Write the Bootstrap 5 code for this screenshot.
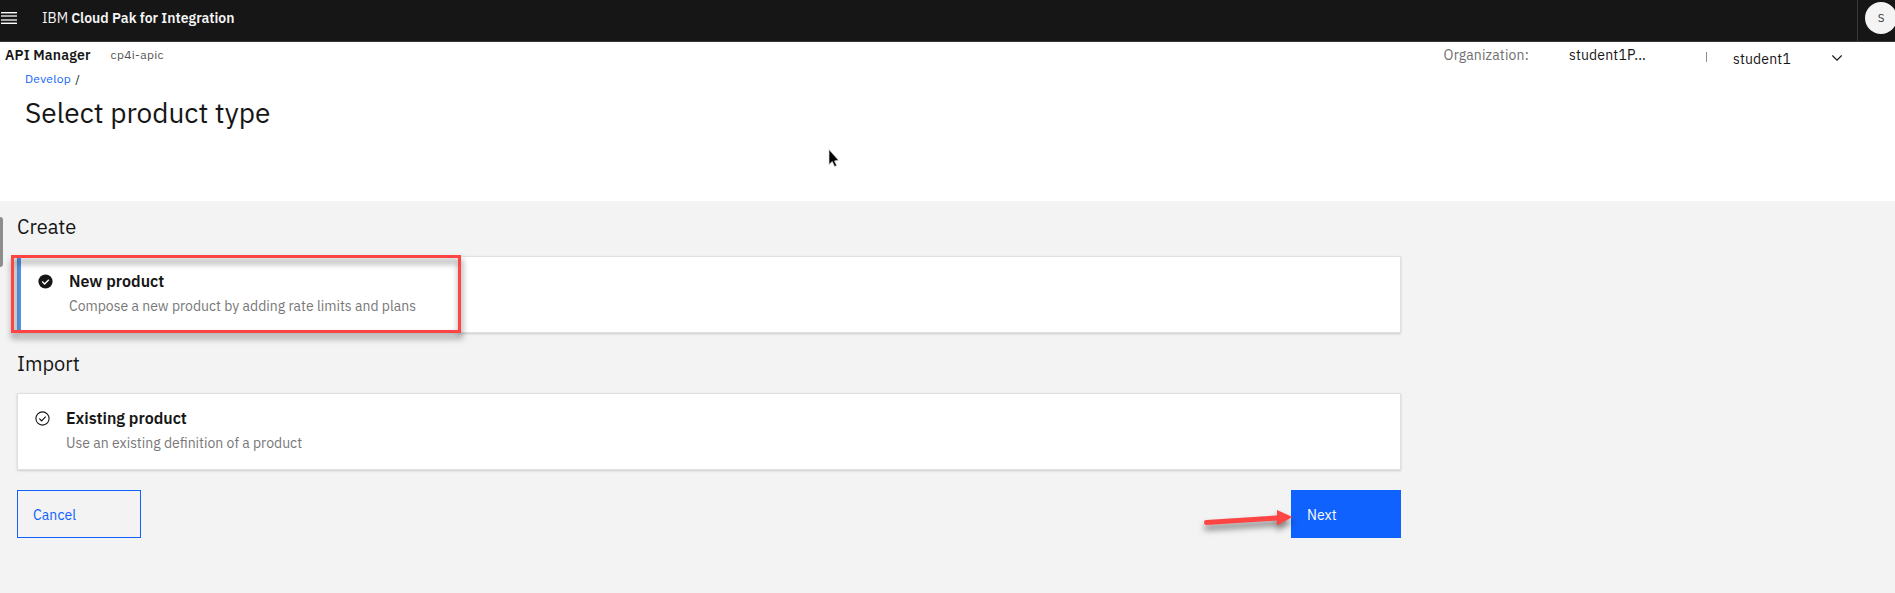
<!DOCTYPE html>
<html lang="en">
<head>
<meta charset="utf-8">
<meta name="viewport" content="width=device-width, initial-scale=1">
<title>API Manager – Select product type</title>
<link href="https://cdn.jsdelivr.net/npm/bootstrap@5.3.0/dist/css/bootstrap.min.css" rel="stylesheet">
<style>
body{font-family:"IBM Plex Sans",Roboto,"Liberation Sans",sans-serif;font-size:14px;color:#161616;overflow:hidden;line-height:24px}
.app-shell{height:593px}
.top-header{height:42px;background:#161616;border-bottom:1px solid #393939;color:#f4f4f4;padding-left:1px}
.brand-name{line-height:36px;margin-left:25px}
.brand-name b{font-weight:600}
.brand-name span{font-weight:400;margin-right:3px}
.menu-icon{margin-top:12px}
.user-cell{width:38px;border-left:1px solid #393939;overflow:hidden;padding:2px 0 0 7px}
.avatar-dot{flex:0 0 32px;width:32px;height:32px;background:#f4f4f4;color:#393939;font-size:11.5px;line-height:32px}
.sub-header{height:26px;line-height:26px;padding:0 53px 0 5px;letter-spacing:.16px}
.product-name{font-weight:600;width:105.6px}
.instance-name{font-size:12px;letter-spacing:.32px;color:#525252}
.org-label{color:#6f6f6f;width:125.4px}
.org-value{width:137px}
.org-rule{width:1px;height:10px;background:#8d8d8d;margin:10px 26px 0 0}
.user-name{width:99px;padding-top:4px}
.crumbs{font-size:12px;line-height:22px;letter-spacing:.32px;padding-left:25px}
.crumbs a,.cancel-btn{color:#0f62fe}
.crumbs span{margin-left:1px}
.page-title{font-size:28px;font-weight:400;line-height:45px;margin:0;padding-left:25px}
.page-head{height:159px}
.content-area{background:#f3f3f3;padding-left:17px}
.content-col{width:1384px}
.section-title{font-size:20px;font-weight:400;line-height:51px;margin:0 0 4px}
.section-title.is-next{margin-top:5px}
.tile{height:77px;background:#fff;border:1px solid #e0e0e0;box-shadow:0 1px 2px rgba(0,0,0,.16);padding:12px 0 0 16.6px;gap:16.4px}
.tile.is-selected{border-left:4px solid #5596e6}
.tile-name{font-size:16px;font-weight:600;line-height:24px;margin-bottom:1px}
.tile-text{color:#777}
.tile svg{margin-top:4.5px}
.action-btn{height:48px;border-radius:0;font-size:14px;text-align:left;padding:1px 15px 0;line-height:46px;letter-spacing:.1px}
.cancel-btn{width:124px;border:1px solid #0f62fe}
.next-btn{width:110px;background:#0f62fe;color:#fff;border:1px solid #0f62fe}
.action-row{margin-top:20px}
.side-handle{position:absolute;left:0;top:16px;width:3px;height:50px;background:#8d8d8d;border-radius:0 4px 4px 0}
.callout-box{position:absolute;left:-10px;top:-2px;width:450px;height:78px;border:3px solid #ff4444;filter:drop-shadow(1px 5px 3px rgba(0,0,0,.5));pointer-events:none}
.callout-arrow{position:absolute;right:100px;top:5px;overflow:visible;filter:drop-shadow(0 5px 3px rgba(0,0,0,.5))}
.mouse-pointer{position:absolute;left:828px;top:107px}
</style>
<script src="https://cdn.jsdelivr.net/npm/bootstrap@5.3.0/dist/js/bootstrap.bundle.min.js"></script>
</head>
<body>
<div class="app-shell d-flex flex-column">
  <header class="top-header d-flex">
    <svg class="menu-icon" width="16" height="12" viewBox="0 0 16 12" shape-rendering="crispEdges"><path fill="#fff" d="M0 0h16v1H0zm0 11h16v1H0z"/><path fill="#777" d="M0 1h16v1H0zm0 9h16v1H0z"/><path fill="#aaa" d="M0 3h16v2H0zm0 4h16v2H0z"/></svg>
    <div class="brand-name"><span>IBM</span><b>Cloud Pak for Integration</b></div>
    <div class="user-cell d-flex ms-auto"><div class="avatar-dot rounded-circle text-center">S</div></div>
  </header>

  <section class="page-head position-relative">
    <div class="sub-header d-flex">
      <div class="product-name">API Manager</div>
      <div class="instance-name">cp4i-apic</div>
      <div class="d-flex ms-auto">
        <div class="org-label">Organization:</div>
        <div class="org-value">student1P...</div>
        <div class="org-rule"></div>
        <div class="user-name">student1</div>
        <svg width="10" height="26" viewBox="0 0 10 26" fill="none" stroke="#161616" stroke-width="1.2"><path d="M.3 13.500 5 18.200l4.700-4.700"/></svg>
      </div>
    </div>
    <nav class="crumbs"><a href="#" class="text-decoration-none">Develop</a><span> /</span></nav>
    <h1 class="page-title">Select product type</h1>
    <svg class="mouse-pointer" width="14" height="20" viewBox="0 0 14 20"><path d="M1 .5v15l3.300-3 2.200 5 2.200-1-2.200-4.600 4-.6z" fill="#000" stroke="#ddd" stroke-width=".7"/></svg>
  </section>

  <main class="content-area position-relative flex-grow-1">
    <div class="side-handle"></div>
    <div class="content-col">
      <h2 class="section-title">Create</h2>
      <div class="tile is-selected d-flex position-relative">
        <svg width="15" height="15" viewBox="0 0 15 15"><circle cx="7.500" cy="7.500" r="7.100" fill="#161616"/><path d="m4.200 7.600 2.400 2.300 4.200-4.200" fill="none" stroke="#fff" stroke-width="1.400"/></svg>
        <div>
          <div class="tile-name">New product</div>
          <div class="tile-text">Compose a new product by adding rate limits and plans</div>
        </div>
        <div class="callout-box"></div>
      </div>
      <h2 class="section-title is-next">Import</h2>
      <div class="tile d-flex">
        <svg width="15" height="15" viewBox="0 0 15 15" fill="none" stroke="#161616"><circle cx="7.500" cy="7.500" r="6.600" stroke-width="1.100"/><path d="m4.300 7.600 2.300 2.200 4.100-4.100" stroke-width="1.200"/></svg>
        <div>
          <div class="tile-name">Existing product</div>
          <div class="tile-text">Use an existing definition of a product</div>
        </div>
      </div>
      <div class="action-row d-flex justify-content-between position-relative">
        <button class="btn action-btn cancel-btn">Cancel</button>
        <button class="btn action-btn next-btn">Next</button>
        <svg class="callout-arrow" width="100" height="40" viewBox="0 0 100 40"><path d="M5.500 27.500 80 22.800" stroke="#ff4444" stroke-width="5" stroke-linecap="round"/><path d="M76 15v15.500l15.500-8.500z" fill="#ff4444"/></svg>
      </div>
    </div>
  </main>
</div>
</body>
</html>
